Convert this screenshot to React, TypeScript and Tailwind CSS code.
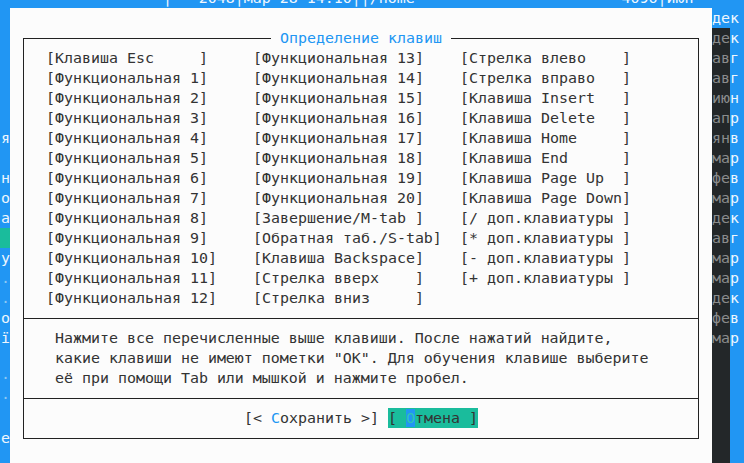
import React from "react";

// Midnight Commander "Learn keys" dialog over the file panels
const colOne = [
  "[Клавиша Esc     ]",
  "[Функциональная 1]",
  "[Функциональная 2]",
  "[Функциональная 3]",
  "[Функциональная 4]",
  "[Функциональная 5]",
  "[Функциональная 6]",
  "[Функциональная 7]",
  "[Функциональная 8]",
  "[Функциональная 9]",
  "[Функциональная 10]",
  "[Функциональная 11]",
  "[Функциональная 12]",
];

const colTwo = [
  "[Функциональная 13]",
  "[Функциональная 14]",
  "[Функциональная 15]",
  "[Функциональная 16]",
  "[Функциональная 17]",
  "[Функциональная 18]",
  "[Функциональная 19]",
  "[Функциональная 20]",
  "[Завершение/M-tab ]",
  "[Обратная таб./S-tab]",
  "[Клавиша Backspace]",
  "[Стрелка вверх    ]",
  "[Стрелка вниз     ]",
];

const colThree = [
  "[Стрелка влево    ]",
  "[Стрелка вправо   ]",
  "[Клавиша Insert   ]",
  "[Клавиша Delete   ]",
  "[Клавиша Home     ]",
  "[Клавиша End      ]",
  "[Клавиша Page Up  ]",
  "[Клавиша Page Down]",
  "[/ доп.клавиатуры ]",
  "[* доп.клавиатуры ]",
  "[- доп.клавиатуры ]",
  "[+ доп.клавиатуры ]",
];

const helpLines = [
  "Нажмите все перечисленные выше клавиши. После нажатий найдите,",
  'какие клавиши не имеют пометки "OK". Для обучения клавише выберите',
  "её при помощи Tab или мышкой и нажмите пробел.",
];

// rows 1..23 of the left panel edge (column 0)
const leftEdge: { ch: string; tone?: "dim" | "bar" }[] = [
  { ch: "" }, { ch: "" }, { ch: "" }, { ch: "" }, { ch: "" }, { ch: "" },
  { ch: "я" }, { ch: "" }, { ch: "н" }, { ch: "о" }, { ch: "а" },
  { ch: "", tone: "bar" }, { ch: "у" }, { ch: ".", tone: "dim" }, { ch: ".", tone: "dim" },
  { ch: "о" }, { ch: "ï" }, { ch: "" }, { ch: "·", tone: "dim" }, { ch: "·", tone: "dim" },
  { ch: "" }, { ch: "е" }, { ch: "" },
];

// rows 2..17 of the right panel month column, under the dialog shadow
const months = [
  "дек", "авг", "авг", "июн", "апр", "янв", "мар", "фев",
  "мар", "дек", "авг", "мар", "мар", "дек", "фев", "мар",
];

const topRow =
  "                  │   2048│мар 28 14:10││/home                       4096│июн";

export default function App() {
  return (
    <div className="w-[744px] h-[463px] overflow-hidden bg-[#2196f3] font-['DejaVu_Sans_Mono',monospace] text-[14.95px] leading-[20px]">
      {/* top panel row, mostly hidden */}
      <div className="h-[8px] overflow-hidden">
        <div className="-mt-[12px] h-[20px] pl-[1px] whitespace-pre text-[#f2f8fe]">{topRow}</div>
      </div>

      <div className="flex">
        {/* left panel edge */}
        <div className="w-[10px] flex flex-col">
          {leftEdge.map((r, i) => (
            <div
              key={i}
              className={`h-[20px] pl-[1px] ${r.tone === "bar" ? "bg-[#1abc9c]" : ""} ${
                r.tone === "dim" ? "text-[#8cc8f5]" : "text-[#eef6fe]"
              }`}
            >
              {r.ch}
            </div>
          ))}
        </div>

        {/* dialog */}
        <div className="w-[702px] h-[460px] bg-[#fcfcfc] text-[#333333] pl-[13px] pt-[30px]">
          <div className="relative w-[676px] border border-[#222222]">
            <div className="absolute left-[247px] -top-[11px] h-[20px] bg-[#fcfcfc] whitespace-pre text-[#2196f3]">
              {" Определение клавиш "}
            </div>

            <div className="grid grid-cols-[207px_207px_auto] pl-[22px] pt-[9px]">
              {[colOne, colTwo, colThree].map((col, c) => (
                <div key={c} className="flex flex-col">
                  {col.map((item) => (
                    <div key={item} className="h-[20px] whitespace-pre">
                      {item}
                    </div>
                  ))}
                </div>
              ))}
            </div>

            <div className="mt-[10px] border-t border-[#222222] pl-[31px] pt-[9px] pb-[10px]">
              {helpLines.map((line) => (
                <div key={line} className="h-[20px] whitespace-pre">
                  {line}
                </div>
              ))}
            </div>

            <div className="border-t border-[#222222] pt-[9px] pb-[10px] flex justify-center whitespace-pre">
              <span>
                {"[< "}
                <span className="text-[#2196f3]">С</span>
                {"охранить >]"}
              </span>
              <span>{" "}</span>
              <span className="bg-[#1abc9c]">
                {"[ "}
                <span className="bg-[#2196f3] text-[#2ec4b6]">О</span>
                {"тмена ]"}
              </span>
            </div>
          </div>
        </div>

        {/* right panel edge with dialog shadow */}
        <div className="flex-1 flex flex-col">
          <div className="h-[20px] whitespace-pre text-[#eef6fe]">дек</div>
          {months.map((m, i) => (
            <div key={i} className="h-[20px] flex">
              <div className="w-[18px] bg-[#232729] text-[#8a8c8d] whitespace-pre">{m.slice(0, 2)}</div>
              <div className="text-[#eef6fe]">{m.slice(2)}</div>
            </div>
          ))}
          {[0, 1, 2, 3, 4, 5].map((i) => (
            <div key={i} className="h-[20px] flex">
              <div className="w-[18px] bg-[#232729]" />
            </div>
          ))}
        </div>
      </div>
    </div>
  );
}
